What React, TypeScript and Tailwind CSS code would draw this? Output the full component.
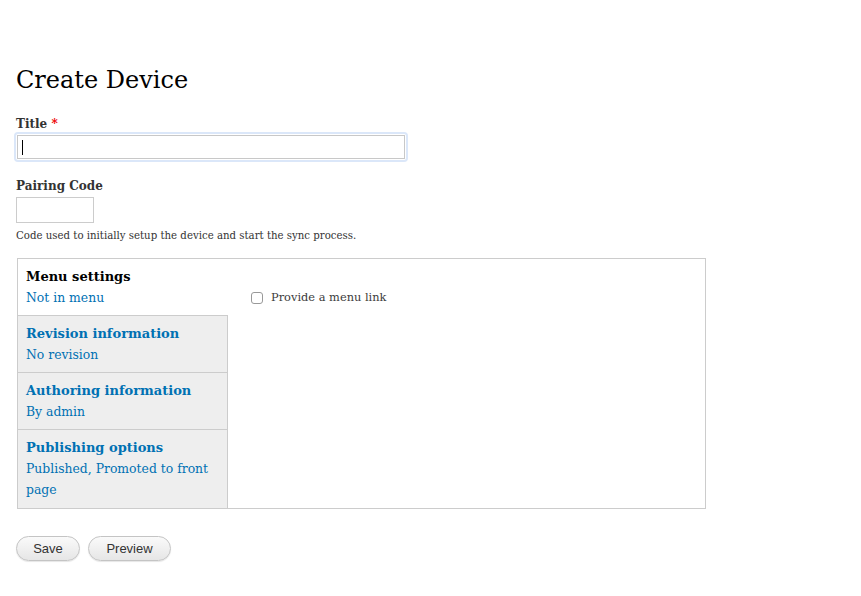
const serif = "font-['DejaVu_Serif',Georgia,serif]";

function Tab({ title, summary, active }: { title: string; summary: string; active?: boolean }) {
  return (
    <div
      className={
        active
          ? 'bg-white pl-[8px] pr-[9px] pt-[8px] pb-[7px] border-b border-[#ccc]'
          : 'bg-[#eeeeee] pl-[8px] pr-[9px] pt-[8px] pb-[7px] border-r border-b border-[#ccc]'
      }
    >
      <div className={`text-[13px] font-bold leading-[20px] ${active ? 'text-black' : 'text-[#0071b3]'}`}>{title}</div>
      <div className="text-[12.4px] leading-[21px] text-[#0071b3]">{summary}</div>
    </div>
  );
}

export default function App() {
  return (
    <div className={`${serif} min-h-[596px] bg-white px-4 pt-[62px] text-[#3b3b3b]`}>
      <h1 className="text-[24px] leading-[36px] text-black">Create Device</h1>

      <div className="mt-[17px]">
        <label className="block text-[12px] font-bold leading-[18px] text-[#333]">
          Title <span className="text-[#e00]">*</span>
        </label>
        <div className="mt-[1px] w-[390px] rounded-[2px] p-[1px] shadow-[0_0_0_2px_#dbe7f9]">
          <div className="flex h-[24px] items-center border border-[#c8c8c8] bg-white px-[4px]">
            <span className="h-[15px] w-px bg-black" />
          </div>
        </div>
      </div>

      <div className="mt-[17px]">
        <label className="block text-[12px] font-bold leading-[18px] text-[#333]">Pairing Code</label>
        <div className="mt-[2px] h-[26px] w-[78px] border border-[#ccc] bg-white" />
        <p className="mt-[5px] text-[10.2px] leading-[16px] text-[#333]">
          Code used to initially setup the device and start the sync process.
        </p>
      </div>

      <div className="mt-[14px] ml-px flex w-[689px] border border-[#ccc]">
        <div className="flex w-[210px] flex-col">
          <Tab title="Menu settings" summary="Not in menu" active />
          <Tab title="Revision information" summary="No revision" />
          <Tab title="Authoring information" summary="By admin" />
          <div className="flex-1 border-r border-[#ccc] bg-[#eeeeee] pl-[8px] pr-[9px] pt-[8px] pb-[8px]">
            <div className="text-[13px] font-bold leading-[20px] text-[#0071b3]">Publishing options</div>
            <div className="text-[12.4px] leading-[21px] text-[#0071b3]">Published, Promoted to front page</div>
          </div>
        </div>
        <div className="flex-1 pl-[23px] pt-[30px]">
          <label className="flex items-center gap-[8px] text-[11.4px] text-[#3b3b3b]">
            <span className="h-[12px] w-[12px] rounded-[3px] border border-[#999] bg-white" />
            Provide a menu link
          </label>
        </div>
      </div>

      <div className="mt-[27px] flex gap-[8px] font-['Liberation_Sans',Arial,sans-serif]">
        <button className="h-[25px] w-[64px] rounded-full border border-[#c4c4c4] bg-gradient-to-b from-[#fafafa] to-[#e6e6e6] text-[13px] text-[#333] shadow-[0_1px_1px_rgba(0,0,0,0.1)]">
          Save
        </button>
        <button className="h-[25px] w-[83px] rounded-full border border-[#c4c4c4] bg-gradient-to-b from-[#fafafa] to-[#e6e6e6] text-[13px] text-[#333] shadow-[0_1px_1px_rgba(0,0,0,0.1)]">
          Preview
        </button>
      </div>
    </div>
  );
}
